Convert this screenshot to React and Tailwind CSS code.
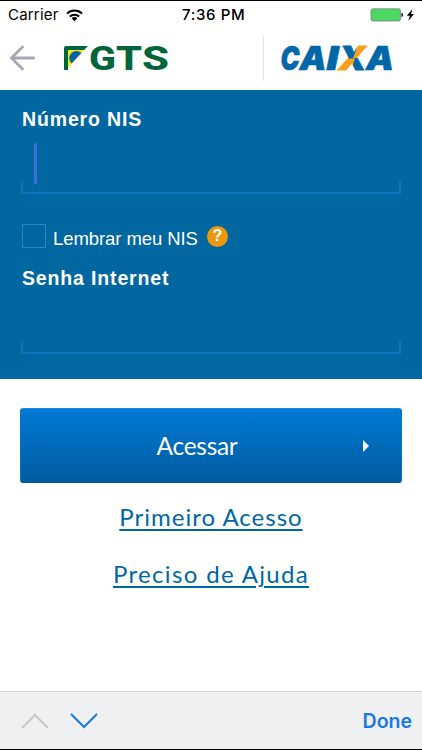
function StatusBar() {
  return (
    <div className="relative flex h-[26px] shrink-0 items-center justify-between border-t border-black pl-[8px] pr-[6px] pt-[3px] font-['Inter',sans-serif] text-black">
      <div className="flex items-center gap-[7px]">
        <span className="text-[15px] leading-5 tracking-[0.2px]">Carrier</span>
        <svg width="17" height="13" viewBox="0 0 17 13" fill="none" stroke="#000" strokeWidth="2">
          <path d="M1 4.600C5.200.600 11.800.600 16 4.600" />
          <path d="M3.800 7.500C6.500 5 10.500 5 13.200 7.500" />
          <path d="M5.600 9.200C7.200 7.700 9.800 7.700 11.400 9.200L8.500 12.300Z" fill="#000" stroke="none" />
        </svg>
      </div>
      <span className="absolute left-[182px] text-[15px] font-medium leading-5 tracking-[0.65px]">7:36 PM</span>
      <svg width="46" height="14" viewBox="0 0 46 14">
        <rect x="1" y=".8" width="29.500" height="12.200" rx="1.800" fill="#4cd862" stroke="#777" strokeWidth=".7" />
        <path d="M31.500 4.800c2 .4 2 4 0 4.400z" fill="#000" />
        <path d="M42.500 1 36.800 7.800h3L38.300 13l5.700-7h-3z" fill="#000" />
      </svg>
    </div>
  );
}

function FgtsLogo() {
  return (
    <svg className="overflow-visible" width="106" height="26" viewBox="0 0 106 26" fontFamily="Roboto, sans-serif" fontWeight="800" fontSize="33.500" fill="#00653a">
      <path d="M3 1h22l-4 4H5v20H1V3q0-2 2-2z" />
      <path d="M5 5h16L5 23z" fill="#f6ea16" />
      <path d="M8.500 18.500a6.500 6.500 0 0 1 10-10.500z" fill="#0862a6" />
      <text x="26" y="25" textLength="27" lengthAdjust="spacingAndGlyphs">G</text>
      <text x="53" y="25" textLength="26" lengthAdjust="spacingAndGlyphs">T</text>
      <text x="79" y="25" textLength="27" lengthAdjust="spacingAndGlyphs">S</text>
    </svg>
  );
}

function CaixaLogo() {
  return (
    <svg className="overflow-visible" width="114" height="26" viewBox="0 0 114 26" fontFamily="Inter, sans-serif" fontWeight="900" fontStyle="italic" fontSize="33" fill="#0068a8">
      <defs>
        {/* The X is blue with one orange stroke */}
        <pattern id="caixa-x" x="0" y="0" width="114" height="40" patternUnits="userSpaceOnUse">
          <rect width="114" height="40" fill="#0068a8" />
          <path d="M72 13 77 0h19v10l-16 3zM74 13.500 69.500 27H50V18l16-4.500z" fill="#f9a01b" />
        </pattern>
      </defs>
      <text x="-.5" y="25" textLength="19" lengthAdjust="spacingAndGlyphs" stroke="#0068a8" strokeWidth=".6">C</text>
      <text x="18.500" y="25" textLength="27" lengthAdjust="spacingAndGlyphs" stroke="#0068a8" strokeWidth=".6">A</text>
      <text x="45.500" y="25" textLength="12" lengthAdjust="spacingAndGlyphs" stroke="#0068a8" strokeWidth=".6">I</text>
      <text x="57.500" y="25" textLength="27.500" lengthAdjust="spacingAndGlyphs" stroke="url(#caixa-x)" strokeWidth=".8" fill="url(#caixa-x)">X</text>
      <text x="85" y="25" textLength="28" lengthAdjust="spacingAndGlyphs" stroke="#0068a8" strokeWidth=".6">A</text>
    </svg>
  );
}

function Header() {
  return (
    <header className="flex h-16 shrink-0 items-center">
      <svg className="ml-[9px]" width="26" height="26" viewBox="0 0 26 26" fill="none" stroke="#a4a7b4" strokeWidth="2.800" strokeLinecap="round" strokeLinejoin="round">
        <path d="M13.500 2 2.500 13l11 11M3 13h22" />
      </svg>
      <div className="ml-[28px]">
        <FgtsLogo />
      </div>
      <div className="ml-auto h-[45px] w-px bg-[#e5e5e5]" />
      <div className="ml-[17px] mr-[27px]">
        <CaixaLogo />
      </div>
    </header>
  );
}

// Underline with short raised ends, as on old Android inputs
function FieldLine() {
  return <div className="h-[13px] border-x-2 border-b-2 border-[#0676bd]" />;
}

function LoginForm() {
  return (
    <section className="flex h-[289px] shrink-0 flex-col bg-[#0067a1] px-[21px] font-['Liberation_Sans',sans-serif] text-white">
      <label className="mt-[17px] pl-px text-[19.5px] font-bold leading-6 tracking-[0.85px]">Número NIS</label>
      <div className="ml-[13px] mt-[12px] h-[41px] w-[3px] rounded-full bg-[#426be0]" />
      <div className="-mt-[3px]">
        <FieldLine />
      </div>
      <div className="mt-[30px] flex h-6 items-center">
        <div className="ml-px size-6 border border-[#2789c4]" />
        <span className="ml-[7px] mt-[5px] text-[18.5px] leading-6 tracking-[-0.08px]">Lembrar meu NIS</span>
        <span className="ml-[9px] flex size-[21px] items-center justify-center rounded-full bg-[#eb980d] text-[16px] font-bold">?</span>
      </div>
      <label className="mt-[18px] pl-px text-[19.5px] font-bold leading-6 tracking-[0.85px]">Senha Internet</label>
      <div className="mt-[51px]">
        <FieldLine />
      </div>
    </section>
  );
}

function KeyboardBar() {
  return (
    <footer className="mt-auto flex h-[59px] shrink-0 items-center border-b border-t border-b-black border-t-[#d5d7da] bg-[#eff0f2] pl-[21px] pr-[10px]">
      <svg width="28" height="16" viewBox="0 0 28 16" fill="none" stroke="#c6c7c9" strokeWidth="2">
        <path d="m1 15 13-13 13 13" />
      </svg>
      <svg className="ml-[21px]" width="28" height="16" viewBox="0 0 28 16" fill="none" stroke="#1878e8" strokeWidth="2">
        <path d="m1 1 13 13L27 1" />
      </svg>
      <span className="ml-auto mt-[3px] font-['Inter',sans-serif] text-[19.5px] font-semibold text-[#1878e8]">Done</span>
    </footer>
  );
}

export default function App() {
  return (
    <div className="flex h-[750px] w-[422px] flex-col overflow-hidden bg-white">
      <StatusBar />
      <Header />
      <LoginForm />
      <main className="flex flex-col items-center px-5 pt-[29px] font-['Lato',sans-serif]">
        <button className="relative flex h-[75px] w-full items-center justify-center rounded-[3px] border border-t-[#168be2] border-r-[#0873c3] border-b-[#00549a] border-l-[#0873c3] bg-linear-to-b from-[#007bd6] to-[#005b9f] text-white">
          <span className="-ml-[28px] mt-px text-[24.5px] tracking-[-0.3px]">Acessar</span>
          <svg className="absolute right-[32px] top-[31px]" width="6" height="12" viewBox="0 0 6 12" fill="#fff">
            <path d="M0 0v12l6-6z" />
          </svg>
        </button>
        <a className="mt-[17px] text-[24px] leading-[34px] tracking-[1px] text-[#0067a6] underline decoration-[1.5px] underline-offset-3">Primeiro Acesso</a>
        <a className="mt-[23px] text-[24px] leading-[34px] tracking-[1.35px] text-[#0067a6] underline decoration-[1.5px] underline-offset-3">Preciso de Ajuda</a>
      </main>
      <KeyboardBar />
    </div>
  );
}
